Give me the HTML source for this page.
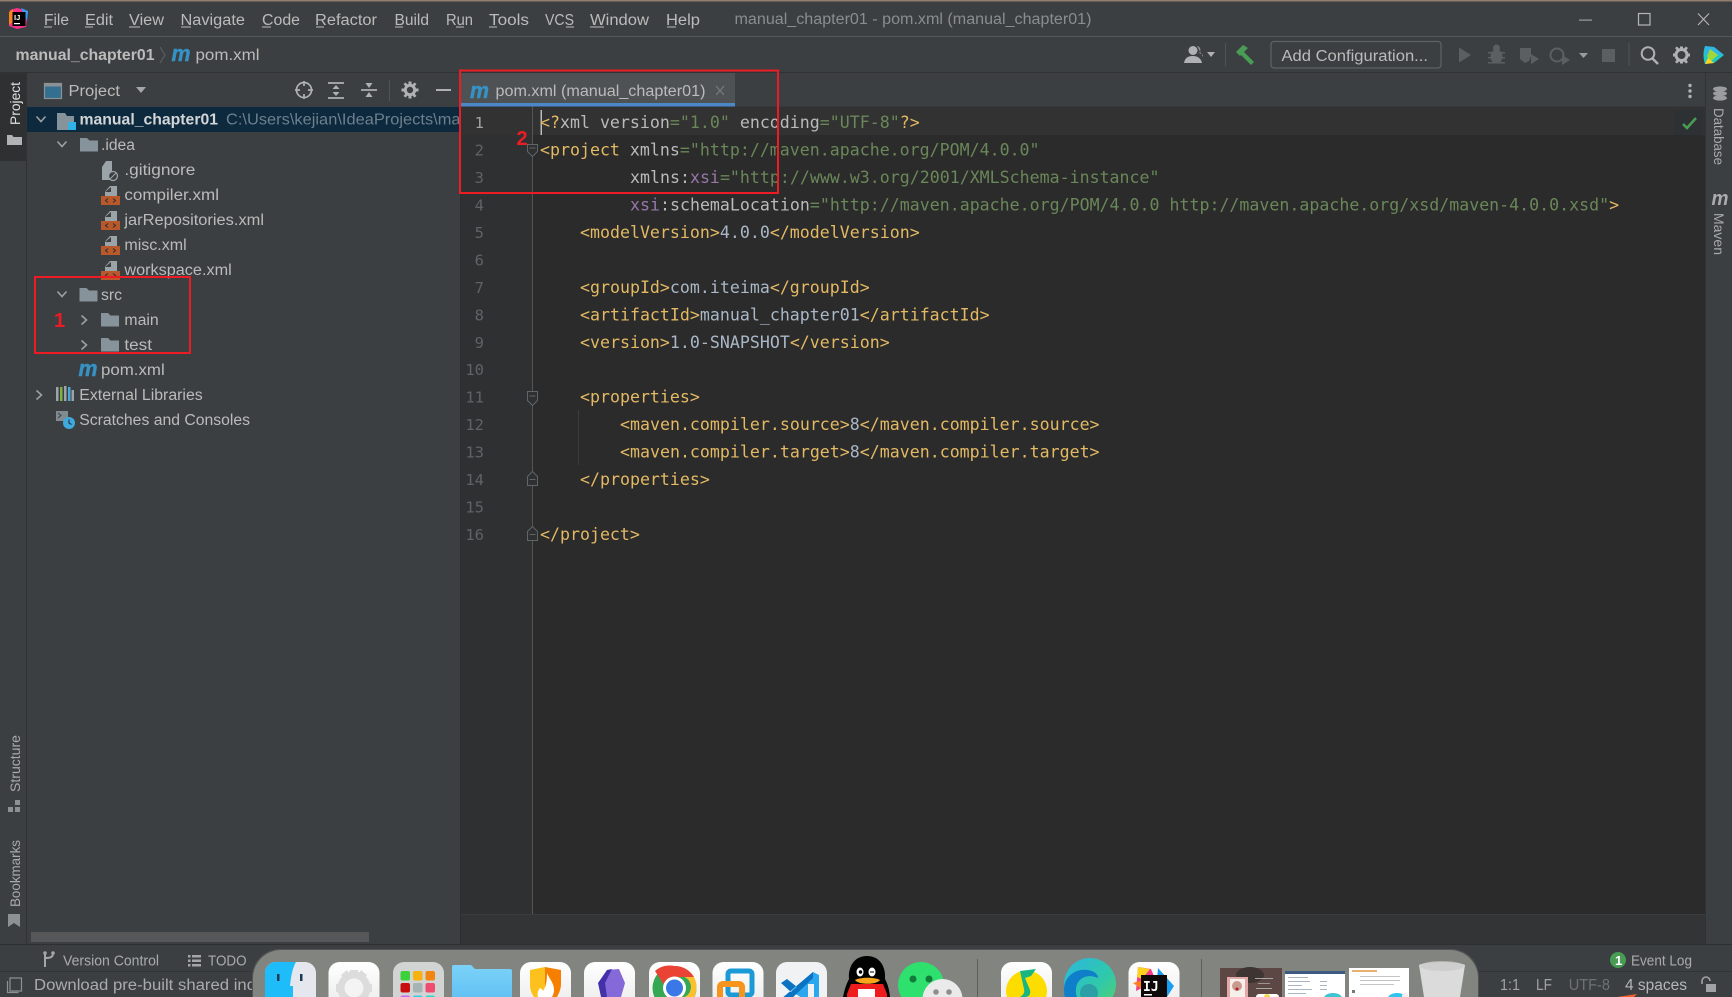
<!DOCTYPE html>
<html><head><meta charset="utf-8"><title>manual_chapter01 - pom.xml</title>
<style>
html,body{margin:0;padding:0;background:#3c3f41;width:1732px;height:997px;overflow:hidden}
svg{display:block;position:absolute;left:0;top:0}
text{font-family:"Liberation Sans",sans-serif;font-size:15.5px;fill:#bbbbbb;white-space:pre}
.m text,text.m{font-family:"DejaVu Sans Mono","Liberation Mono",monospace;font-size:16.6px;fill:#bababa}
.t{fill:#e3b964}.v{fill:#6a8759}.n{fill:#9876aa}.x{fill:#a9b7c6}.a{fill:#bababa}
.ln{font-family:"DejaVu Sans Mono","Liberation Mono",monospace;font-size:15.5px;fill:#606366;text-anchor:end}
.mi{font-weight:bold;font-style:italic;fill:#3592c4;font-size:22px;stroke:#3592c4;stroke-width:.5px}
</style></head><body>
<svg width="1732" height="997" viewBox="0 0 1732 997" xmlns="http://www.w3.org/2000/svg">
<defs>
<path id="folder" d="M0 0h7l2.5 2.5H18V13.5H0z" fill="#87939a"/>
<g id="xmlf"><path d="M4 10V5.500L9 0h7v10z" fill="#9ba4a9"/><path d="M4 6h6V1z" fill="#3c3f41"/><rect x="0" y="10" width="19" height="9" fill="#b9592b"/><path d="M7 12.500l-2.500 2 2.500 2M12 12.500l2.500 2-2.500 2" stroke="#33302e" stroke-width="1.100" fill="none"/></g>
<path id="down" d="M-4.500-2.500L0 2.500l4.500-5" stroke="#9da0a2" stroke-width="1.600" fill="none"/>
<path id="right" d="M-2.500-4.500L2.500 0l-5 4.500" stroke="#9da0a2" stroke-width="1.600" fill="none"/>
<clipPath id="dockc"><path d="M253 997V978a28 28 0 0 1 28-28H1450a28 28 0 0 1 28 28V997z"/></clipPath>
<linearGradient id="edge" x1="0" y1="0" x2="1" y2="1"><stop offset="0" stop-color="#2cb7e0"/><stop offset=".6" stop-color="#30c9a8"/><stop offset="1" stop-color="#5bd168"/></linearGradient>
<linearGradient id="fold" x1="0" y1="0" x2="0" y2="1"><stop offset="0" stop-color="#7cd2f8"/><stop offset="1" stop-color="#62c2f4"/></linearGradient>
<linearGradient id="cube" x1="0" y1="0" x2="0" y2="1"><stop offset="0" stop-color="#ffffff"/><stop offset="1" stop-color="#e9e9e9"/></linearGradient>
</defs>

<!-- base -->
<rect width="1732" height="997" fill="#3c3f41"/>
<rect width="1732" height="1.500" fill="#8f7d6d"/>
<rect y="36" width="1732" height="1" fill="#55585a"/>
<rect y="72" width="1732" height="1" fill="#323232"/>

<!-- logo -->
<g>
<path d="M10 10l7-2 11 3-2 16-9 2-8-3z" fill="#f5318a"/>
<path d="M21 8l7 3-1 10z" fill="#2f9df4"/>
<path d="M9 12l4-3 1 12-5 4z" fill="#fc801d"/>
<rect x="12.500" y="12" width="13" height="14" fill="#000"/>
<text x="14" y="20" style="font-size:7.500px;font-weight:bold;fill:#fff">IJ</text>
<rect x="14" y="23" width="6" height="1.200" fill="#fff"/>
</g>

<!-- menu -->
<g>
<text x="44" y="25" textLength="25" lengthAdjust="spacingAndGlyphs">File</text>
<text x="85" y="25" textLength="28" lengthAdjust="spacingAndGlyphs">Edit</text>
<text x="129" y="25" textLength="35" lengthAdjust="spacingAndGlyphs">View</text>
<text x="180.500" y="25" textLength="64.500" lengthAdjust="spacingAndGlyphs">Navigate</text>
<text x="262" y="25" textLength="38" lengthAdjust="spacingAndGlyphs">Code</text>
<text x="315" y="25" textLength="62" lengthAdjust="spacingAndGlyphs">Refactor</text>
<text x="394.500" y="25" textLength="34.500" lengthAdjust="spacingAndGlyphs">Build</text>
<text x="446" y="25" textLength="27" lengthAdjust="spacingAndGlyphs">Run</text>
<text x="489" y="25" textLength="40" lengthAdjust="spacingAndGlyphs">Tools</text>
<text x="545" y="25" textLength="29" lengthAdjust="spacingAndGlyphs">VCS</text>
<text x="590" y="25" textLength="59" lengthAdjust="spacingAndGlyphs">Window</text>
<text x="666" y="25" textLength="34" lengthAdjust="spacingAndGlyphs">Help</text>
<g fill="#bbbbbb">
<rect x="44" y="26.500" width="8" height="1"/><rect x="85" y="26.500" width="8" height="1"/><rect x="129" y="26.500" width="11" height="1"/><rect x="181" y="26.500" width="10" height="1"/><rect x="262" y="26.500" width="9" height="1"/><rect x="316" y="26.500" width="8" height="1"/><rect x="395" y="26.500" width="8" height="1"/><rect x="456" y="26.500" width="8" height="1"/><rect x="489" y="26.500" width="8" height="1"/><rect x="566" y="26.500" width="8" height="1"/><rect x="590" y="26.500" width="14" height="1"/><rect x="667" y="26.500" width="9" height="1"/>
</g>
<text x="734.500" y="24" textLength="357" lengthAdjust="spacingAndGlyphs" style="fill:#8a8d8f">manual_chapter01 - pom.xml (manual_chapter01)</text>
</g>

<!-- window controls -->
<rect x="1579" y="19.500" width="13" height="1.200" fill="#9a9c9e"/>
<rect x="1638.500" y="13.500" width="11.500" height="11.500" fill="none" stroke="#b4b6b8" stroke-width="1.200"/>
<path d="M1698 13.500l11 11.500M1709 13.500l-11 11.500" stroke="#b4b6b8" stroke-width="1.100"/>

<!-- breadcrumb toolbar -->
<text x="15.500" y="60" textLength="139" lengthAdjust="spacingAndGlyphs" style="font-weight:bold;fill:#bbbbbb">manual_chapter01</text>
<path d="M160 47l5 8-5 8" stroke="#5f6264" fill="none"/>
<text class="mi" x="171.500" y="61" textLength="19" lengthAdjust="spacingAndGlyphs">m</text>
<text x="195.500" y="60" textLength="64" lengthAdjust="spacingAndGlyphs">pom.xml</text>

<!-- right toolbar -->
<g fill="#afb1b3">
<circle cx="1193" cy="50.500" r="4.500"/><path d="M1184 63c1-6 5-7 9-7s8 2 9 7z"/><path d="M1197 46a4 4 0 0 1 2 7l4 2v2z" fill="#8f9193"/>
<path d="M1207 52h8l-4 5z"/>
</g>
<rect x="1225" y="43" width="1" height="23" fill="#515456"/>
<path d="M1243 51l11 11-3 3-11-11zM1236 52l7-7 5 3-8 8z" fill="#499c54"/>
<rect x="1271" y="41.500" width="170" height="26.500" rx="3" fill="#3c3f41" stroke="#5e6163" stroke-width="1.300"/>
<text x="1281.500" y="61" textLength="146.500" lengthAdjust="spacingAndGlyphs">Add Configuration...</text>
<g fill="#5c5f61">
<path d="M1459 47.500l12 7.500-12 7.500z"/>
<ellipse cx="1496.500" cy="56.500" rx="6" ry="7"/><circle cx="1496.500" cy="48" r="3.500"/><path d="M1488 52h17v1.500h-17zM1488 57h17v1.500h-17zM1488 62h17v1.500h-17z"/>
<path d="M1520 48h11v8l-2 5-4 2-5-4z"/><path d="M1531 54l8 5-8 5z"/>
<circle cx="1557" cy="55" r="6.500" fill="none" stroke="#5c5f61" stroke-width="2"/><path d="M1562 55l8 5-8 5z"/>
<path d="M1579 53h9l-4.500 5z" fill="#9a9c9e"/>
<rect x="1602" y="49" width="13" height="13"/>
</g>
<rect x="1628.500" y="43" width="1" height="23" fill="#515456"/>
<circle cx="1648" cy="53.500" r="6.300" fill="none" stroke="#afb1b3" stroke-width="2"/><path d="M1652 58l6 6" stroke="#afb1b3" stroke-width="2.400"/>
<g fill="#afb1b3"><circle cx="1681.500" cy="55" r="5.500" fill="none" stroke="#afb1b3" stroke-width="3"/><path d="M1680 46.500h3v3h-3zM1680 60.500h3v3h-3zM1673 53.500h3v3h-3zM1687 53.500h3v3h-3zM1675 48l2-1.500 2 2-2 2zM1688 48l-2-1.500-2 2 2 2zM1675 62l2 1.500 2-2-2-2zM1688 62l-2 1.500-2-2 2-2z"/></g>
<path d="M1705 46l9 1 10 8-10 8-9 1c-2-6-2-12 0-18z" fill="#20c8c0"/><path d="M1705 46l9 1 10 8-19 0z" fill="#35b0f0" opacity=".8"/><path d="M1710 49l8 6-8 7-3-6z" fill="#9fd838"/><path d="M1705 64l9-1-6-5z" fill="#ffd21f"/>

<!-- left stripe -->
<rect x="26" y="73" width="1" height="872" fill="#323232"/>
<rect x="0" y="73" width="26" height="88" fill="#2e3032"/>
<text transform="translate(20,125) rotate(-90)" textLength="43" lengthAdjust="spacingAndGlyphs" style="font-size:14px;fill:#e0e0e0">Project</text>
<path d="M7 135h5l1.500 2h8.500v8H7z" fill="#b0b2b4"/>
<text transform="translate(20,792) rotate(-90)" textLength="57" lengthAdjust="spacingAndGlyphs" style="font-size:14px;fill:#a9abad">Structure</text>
<path d="M15 800h5v5h-5zM8 807h5v5H8zM15 807h5v5h-5z" fill="#8e9193"/>
<text transform="translate(20,907) rotate(-90)" textLength="67" lengthAdjust="spacingAndGlyphs" style="font-size:14px;fill:#a9abad">Bookmarks</text>
<path d="M8 914h12v13l-6-4-6 4z" fill="#8e9193"/>

<!-- project header -->
<rect x="44.500" y="83.500" width="17" height="15" fill="#33708f" stroke="#8b9195" stroke-width="1.200"/>
<rect x="44.500" y="83.500" width="17" height="3" fill="#8b9195"/>
<text x="68.500" y="96" textLength="51.500" lengthAdjust="spacingAndGlyphs">Project</text>
<path d="M136 87h10l-5 6z" fill="#a4a6a8"/>
<g stroke="#afb1b3" fill="none" stroke-width="1.700">
<circle cx="304" cy="90" r="7.500"/><path d="M304 81v5M304 94v5M295 90h5M308 90h5"/>
<path d="M328 83h16M328 98h16" /><path d="M336 85l-3.500 4h7zM336 96l-3.500-4h7z" fill="#afb1b3" stroke="none"/>
<path d="M361 90h16" /><path d="M369 88l-3.500-5h7zM369 92l-3.500 5h7z" fill="#afb1b3" stroke="none"/>
</g>
<rect x="389" y="80" width="1" height="21" fill="#515456"/>
<circle cx="410" cy="90" r="4.700" fill="none" stroke="#afb1b3" stroke-width="3"/>
<path d="M408.500 81.500h3v3h-3zM408.500 95.500h3v3h-3zM401.500 88.500h3v3h-3zM415.500 88.500h3v3h-3zM403.500 84l2-1.500 2 2-2 2zM416.500 84l-2-1.500-2 2 2 2zM403.500 96l2 1.500 2-2-2-2zM416.500 96l-2 1.500-2-2 2-2z" fill="#afb1b3"/>
<rect x="436" y="89" width="15" height="2" fill="#afb1b3"/>

<!-- tree -->
<rect x="27" y="107" width="433" height="25" fill="#0d293e"/>
<use href="#down" x="41" y="119"/>
<path d="M57 113h8l2 3h7v14H57z" fill="#87939a"/><rect x="68" y="122" width="8" height="8" fill="#33b0e6"/>
<text x="79.500" y="124.500" textLength="138.500" lengthAdjust="spacingAndGlyphs" style="font-weight:bold;fill:#d3d5d7">manual_chapter01</text>
<svg x="0" y="0" width="460" height="997"><text x="226" y="124.500" textLength="240" lengthAdjust="spacingAndGlyphs" style="fill:#6e7f8d">C:\Users\kejian\IdeaProjects\mar</text></svg>

<use href="#down" x="62" y="144"/>
<use href="#folder" x="80" y="138"/>
<text x="101" y="150" textLength="34" lengthAdjust="spacingAndGlyphs">.idea</text>

<path d="M106 161h6v19h-10v-13z" fill="#9ba4a9"/><circle cx="113" cy="176" r="4.500" fill="#3c3f41" stroke="#9ba4a9" stroke-width="1.300"/><path d="M110 179l6-6" stroke="#9ba4a9"/>
<text x="124.400" y="175" textLength="71" lengthAdjust="spacingAndGlyphs">.gitignore</text>
<use href="#xmlf" x="101" y="186"/>
<text x="124.400" y="200" textLength="94.600" lengthAdjust="spacingAndGlyphs">compiler.xml</text>
<use href="#xmlf" x="101" y="211"/>
<text x="124.400" y="225" textLength="139.600" lengthAdjust="spacingAndGlyphs">jarRepositories.xml</text>
<use href="#xmlf" x="101" y="236"/>
<text x="124.400" y="250" textLength="62.300" lengthAdjust="spacingAndGlyphs">misc.xml</text>
<use href="#xmlf" x="101" y="261"/>
<text x="124.400" y="275" textLength="107.300" lengthAdjust="spacingAndGlyphs">workspace.xml</text>

<use href="#down" x="62" y="294"/>
<use href="#folder" x="79.500" y="288"/>
<text x="101" y="300" textLength="21" lengthAdjust="spacingAndGlyphs">src</text>
<use href="#right" x="84" y="320"/>
<use href="#folder" x="101" y="313"/>
<text x="124.400" y="325" textLength="34.300" lengthAdjust="spacingAndGlyphs">main</text>
<use href="#right" x="84" y="345"/>
<use href="#folder" x="101" y="338"/>
<text x="124.400" y="350" textLength="27.600" lengthAdjust="spacingAndGlyphs">test</text>
<text class="mi" x="78.500" y="376" textLength="19" lengthAdjust="spacingAndGlyphs">m</text>
<text x="101" y="375" textLength="63.700" lengthAdjust="spacingAndGlyphs">pom.xml</text>
<use href="#right" x="39" y="395"/>
<path d="M56 387h2.500v14H56z" fill="#9ba4a9"/><path d="M60 387h2.500v14H60z" fill="#7cb342"/><path d="M64 386h2.500v15H64z" fill="#9ba4a9"/><path d="M68 387h2.500v14H68z" fill="#4aa8d8"/><path d="M71.500 390H74v11h-2.500z" fill="#9ba4a9"/>
<text x="79.300" y="400" textLength="123.400" lengthAdjust="spacingAndGlyphs">External Libraries</text>
<rect x="56" y="411" width="12" height="10" fill="#7f8b91"/><path d="M58 413l3 2.500-3 2.500" stroke="#3c3f41" fill="none"/>
<circle cx="69" cy="423" r="6" fill="#3fa8dc"/><path d="M69 419.500V423l2.500 1.500" stroke="#1d3a4a" fill="none" stroke-width="1.200"/>
<text x="79.300" y="425" textLength="170.700" lengthAdjust="spacingAndGlyphs">Scratches and Consoles</text>

<!-- panel scrollbar + divider -->
<rect x="31" y="932" width="338" height="10" fill="#555759"/>
<rect x="460" y="73" width="1" height="872" fill="#2c2e30"/>

<!-- tabs -->
<rect x="461" y="73" width="1245" height="33.500" fill="#3c3f41"/>
<rect x="461" y="73" width="274" height="30" fill="#4e5254"/>
<rect x="461" y="103" width="274" height="3.500" fill="#4a88c7"/>
<text class="mi" x="470" y="98" textLength="19" lengthAdjust="spacingAndGlyphs">m</text>
<text x="495.500" y="96" textLength="210" lengthAdjust="spacingAndGlyphs">pom.xml (manual_chapter01)</text>
<path d="M716 86l8 9M724 86l-8 9" stroke="#787a7c" stroke-width="1.200"/>
<g fill="#afb1b3"><circle cx="1690" cy="85.500" r="1.700"/><circle cx="1690" cy="91" r="1.700"/><circle cx="1690" cy="96.500" r="1.700"/></g>

<!-- editor -->
<rect x="461" y="106.500" width="1244" height="807.500" fill="#2b2b2b"/>
<rect x="461" y="106.500" width="71" height="807.500" fill="#2e3032"/>
<rect x="461" y="106.500" width="1244" height="28.500" fill="#323232"/>
<rect x="1675" y="110" width="28" height="25" fill="#2e3133"/>
<path d="M1683 124l4 4 9-10" stroke="#499c54" stroke-width="2.600" fill="none"/>
<rect x="532" y="106.500" width="1" height="807.500" fill="#555555"/>
<rect x="461" y="914" width="1244" height="31" fill="#323435"/>
<rect x="461" y="914" width="1244" height="1" fill="#3a3c3e"/>

<!-- line numbers -->
<g>
<text class="ln" x="484" y="128" style="fill:#a4a3a3">1</text>
<text class="ln" x="484" y="155.500">2</text>
<text class="ln" x="484" y="183">3</text>
<text class="ln" x="484" y="210.400">4</text>
<text class="ln" x="484" y="237.900">5</text>
<text class="ln" x="484" y="265.400">6</text>
<text class="ln" x="484" y="292.800">7</text>
<text class="ln" x="484" y="320.300">8</text>
<text class="ln" x="484" y="347.800">9</text>
<text class="ln" x="484" y="375.200">10</text>
<text class="ln" x="484" y="402.700">11</text>
<text class="ln" x="484" y="430.200">12</text>
<text class="ln" x="484" y="457.600">13</text>
<text class="ln" x="484" y="485.100">14</text>
<text class="ln" x="484" y="512.600">15</text>
<text class="ln" x="484" y="540">16</text>
</g>

<!-- fold markers -->
<g fill="#2e3032" stroke="#626567">
<path d="M527.500 144.500h10v7l-5 5-5-5z"/><path d="M527.500 391.500h10v9l-5 5-5-5z"/>
<path d="M527.500 485.500h10v-9l-5-5-5 5z"/><path d="M527.500 540.500h10v-9l-5-5-5 5z"/>
<path d="M529.500 148h6M529.500 396h6M529.500 479.500h6M529.500 534.500h6" fill="none"/>
</g>

<!-- code -->
<rect x="540.500" y="110" width="1.500" height="25" fill="#bbbbbb"/>
<g class="m">
<text x="540" y="128"><tspan class="t">&lt;?</tspan><tspan class="a">xml version</tspan><tspan class="v">="1.0"</tspan><tspan class="a"> encoding</tspan><tspan class="v">="UTF-8"</tspan><tspan class="t">?&gt;</tspan></text>
<text x="540" y="155.500"><tspan class="t">&lt;project</tspan><tspan class="a"> xmlns</tspan><tspan class="v">="http://maven.apache.org/POM/4.0.0"</tspan></text>
<text x="630" y="183"><tspan class="a">xmlns:</tspan><tspan class="n">xsi</tspan><tspan class="v">="http://www.w3.org/2001/XMLSchema-instance"</tspan></text>
<text x="630" y="210.400"><tspan class="n">xsi</tspan><tspan class="a">:schemaLocation</tspan><tspan class="v">="http://maven.apache.org/POM/4.0.0 http://maven.apache.org/xsd/maven-4.0.0.xsd"</tspan><tspan class="t">&gt;</tspan></text>
<text x="580" y="237.900"><tspan class="t">&lt;modelVersion&gt;</tspan><tspan class="x">4.0.0</tspan><tspan class="t">&lt;/modelVersion&gt;</tspan></text>
<text x="580" y="292.800"><tspan class="t">&lt;groupId&gt;</tspan><tspan class="x">com.iteima</tspan><tspan class="t">&lt;/groupId&gt;</tspan></text>
<text x="580" y="320.300"><tspan class="t">&lt;artifactId&gt;</tspan><tspan class="x">manual_chapter01</tspan><tspan class="t">&lt;/artifactId&gt;</tspan></text>
<text x="580" y="347.800"><tspan class="t">&lt;version&gt;</tspan><tspan class="x">1.0-SNAPSHOT</tspan><tspan class="t">&lt;/version&gt;</tspan></text>
<text x="580" y="402.700"><tspan class="t">&lt;properties&gt;</tspan></text>
<text x="620" y="430.200"><tspan class="t">&lt;maven.compiler.source&gt;</tspan><tspan class="x">8</tspan><tspan class="t">&lt;/maven.compiler.source&gt;</tspan></text>
<text x="620" y="457.600"><tspan class="t">&lt;maven.compiler.target&gt;</tspan><tspan class="x">8</tspan><tspan class="t">&lt;/maven.compiler.target&gt;</tspan></text>
<text x="580" y="485.100"><tspan class="t">&lt;/properties&gt;</tspan></text>
<text x="540" y="540"><tspan class="t">&lt;/project&gt;</tspan></text>
</g>
<rect x="578" y="410" width="1" height="55" fill="#3a3c3d"/>

<!-- right stripe -->
<rect x="1705" y="73" width="1" height="872" fill="#323232"/>
<g fill="#9a9c9e"><ellipse cx="1720" cy="89" rx="7" ry="2.600"/><ellipse cx="1720" cy="93.500" rx="7" ry="2.600"/><ellipse cx="1720" cy="98" rx="7" ry="2.600"/></g>
<text transform="translate(1714,108) rotate(90)" textLength="57" lengthAdjust="spacingAndGlyphs" style="font-size:14px;fill:#a9abad">Database</text>
<text x="1711.500" y="205" textLength="17" lengthAdjust="spacingAndGlyphs" style="font-weight:bold;font-style:italic;fill:#a9abad;font-size:20px">m</text>
<text transform="translate(1714,213) rotate(90)" textLength="42" lengthAdjust="spacingAndGlyphs" style="font-size:14px;fill:#a9abad">Maven</text>

<!-- bottom bars -->
<rect y="945" width="1732" height="52" fill="#3c3f41"/>
<rect y="944" width="1732" height="1" fill="#2d2f31"/>
<rect y="971" width="1732" height="1" fill="#323436"/>
<path d="M45 954v13M45 958c6 0 8-1 8-5" stroke="#a4a6a8" stroke-width="2" fill="none"/><circle cx="45" cy="953" r="1.800" fill="#a4a6a8"/><circle cx="53" cy="953" r="1.800" fill="#a4a6a8"/>
<text x="63" y="965.500" textLength="96" lengthAdjust="spacingAndGlyphs" style="font-size:14.500px;fill:#a9abad">Version Control</text>
<path d="M188 955h2.500v2.500H188zM192 955h9v2.500h-9zM188 959.500h2.500v2.500H188zM192 959.500h9v2.500h-9zM188 964h2.500v2.500H188zM192 964h9v2.500h-9z" fill="#a4a6a8"/>
<text x="208" y="965.500" textLength="38.500" lengthAdjust="spacingAndGlyphs" style="font-size:14.500px;fill:#a9abad">TODO</text>
<rect x="10" y="978" width="11.500" height="13" fill="none" stroke="#8e9193" stroke-width="1.200"/>
<path d="M7.500 981v11.500h11" fill="none" stroke="#8e9193" stroke-width="1.200"/>
<text x="34" y="990" textLength="222" lengthAdjust="spacingAndGlyphs" style="fill:#a9abad">Download pre-built shared ind</text>

<circle cx="1618" cy="960" r="8" fill="#499c54"/><text x="1615" y="965" style="font-size:13px;font-weight:bold;fill:#fff">1</text>
<text x="1631" y="965.500" textLength="61" lengthAdjust="spacingAndGlyphs" style="font-size:14.500px;fill:#a9abad">Event Log</text>
<text x="1500" y="990" textLength="20" lengthAdjust="spacingAndGlyphs" style="fill:#a0a2a4">1:1</text>
<text x="1536" y="990" textLength="16" lengthAdjust="spacingAndGlyphs" style="fill:#a0a2a4">LF</text>
<text x="1568.700" y="990" textLength="41.300" lengthAdjust="spacingAndGlyphs" style="fill:#6f7274">UTF-8</text>
<text x="1625" y="990" textLength="62" lengthAdjust="spacingAndGlyphs" style="fill:#b4b6b8">4 spaces</text>
<rect x="1706" y="984" width="10" height="8" fill="#a0a2a4"/><path d="M1702 984v-3a4 4 0 0 1 8 0" fill="none" stroke="#a0a2a4" stroke-width="1.600"/>
<path d="M1617 997l20-3-3 3z" fill="#f0622a"/>

<!-- red annotations -->
<rect x="35" y="277" width="155" height="76" fill="none" stroke="#ed1c24" stroke-width="2"/>
<text x="54" y="327" style="font-size:20px;font-weight:bold;fill:#ed1c24">1</text>
<rect x="460" y="70.500" width="318" height="122.500" fill="none" stroke="#ed1c24" stroke-width="2"/>
<text x="516.500" y="145" style="font-size:20px;font-weight:bold;fill:#ed1c24">2</text>

<!-- dock -->
<path d="M252 997V977a28 28 0 0 1 28-28H1451a28 28 0 0 1 28 28V997z" fill="#505452"/>
<g clip-path="url(#dockc)">
<rect x="253" y="950" width="1225" height="47" fill="#82857f"/>
<!-- finder -->
<rect x="265" y="962" width="51" height="51" rx="11" fill="#e4e8ee"/>
<path d="M276 962h20c-3 5-5 13-6 24h3v11H265v-24a11 11 0 0 1 11-11z" fill="#1ebcf8"/>
<rect x="277" y="974" width="2.500" height="7" fill="#1d3b55"/><rect x="300" y="974" width="2.500" height="7" fill="#1d3b55"/>
<!-- settings -->
<rect x="328.500" y="962" width="51" height="51" rx="11" fill="url(#cube)"/>
<circle cx="354" cy="988" r="13" fill="none" stroke="#dcdcdc" stroke-width="7"/>
<circle cx="354" cy="988" r="9" fill="#f4f4f4"/>
<path d="M350 970h8l1 7h-10zM336 984v8l7 1v-10zM372 984v8l-7 1v-10zM341 975l6-5 4 7-5 4zM367 975l-6-5-4 7 5 4z" fill="#dcdcdc"/>
<!-- launchpad -->
<rect x="393" y="962" width="51" height="51" rx="11" fill="#d2d4d3"/>
<g>
<rect x="400.500" y="971" width="9.500" height="9.500" rx="2" fill="#3bd13b"/><rect x="413" y="971" width="9.500" height="9.500" rx="2" fill="#f8b20f"/><rect x="425.500" y="971" width="9.500" height="9.500" rx="2" fill="#f0860f"/>
<rect x="400.500" y="983" width="9.500" height="9.500" rx="2" fill="#c80f0f"/><rect x="413" y="983" width="9.500" height="9.500" rx="2" fill="#a6b3b3"/><rect x="425.500" y="983" width="9.500" height="9.500" rx="2" fill="#f04c70"/>
<rect x="400.500" y="995.500" width="9.500" height="9.500" rx="2" fill="#c868f0"/><rect x="413" y="995.500" width="9.500" height="9.500" rx="2" fill="#30d0e8"/><rect x="425.500" y="995.500" width="9.500" height="9.500" rx="2" fill="#30d8c8"/>
</g>
<!-- folder -->
<path d="M452 967a2 2 0 0 1 2-2h17l4 4h35a2 2 0 0 1 2 2v26h-60z" fill="url(#fold)"/>
<!-- fire -->
<rect x="520" y="962" width="51" height="51" rx="11" fill="url(#cube)"/>
<path d="M530 970l15-3v30h-11c-3-4-4-8-4-13z" fill="#fdc11d"/><path d="M545 967l16 3v14c0 5-2 9-4 13h-12z" fill="#f77f00"/>
<path d="M547 973c3 7 7 10 7 17 0 3-1 5-2 7h-14c-1-3 0-7 2-9 2 1 3 2 3 3 3-4 4-10 4-18z" fill="#fff"/>
<!-- obsidian -->
<rect x="584" y="962" width="51" height="51" rx="11" fill="url(#cube)"/>
<path d="M607 970l12-1 6 14-4 14h-17l-4-14 6-8z" fill="#8569d8"/><path d="M612 969l-5 1-9 13 3 14h6l-2-14z" fill="#4430a8"/>
<!-- chrome -->
<rect x="649" y="962" width="51" height="51" rx="11" fill="url(#cube)"/>
<circle cx="674.500" cy="988" r="22" fill="#34a853"/>
<path d="M674.500 966a22 22 0 0 1 19.500 11h-20a11 11 0 0 0-10 8l-9-14a22 22 0 0 1 19.500-5z" fill="#ea4335"/>
<path d="M694 977a22 22 0 0 1 2.500 11c0 3-1 6-2 9h-10a11 11 0 0 0 0-20z" fill="#fbc02d"/>
<circle cx="674.500" cy="988" r="11.500" fill="#fff"/><circle cx="674.500" cy="988" r="8.500" fill="#3b78e7"/>
<!-- vmware -->
<rect x="712.500" y="962" width="51" height="51" rx="11" fill="url(#cube)"/>
<rect x="728" y="971" width="24" height="24" rx="3" fill="none" stroke="#1b9ad6" stroke-width="5"/>
<rect x="720" y="984" width="22" height="22" rx="3" fill="none" stroke="#f7941d" stroke-width="6"/>
<!-- vscode -->
<rect x="776" y="962" width="51" height="51" rx="11" fill="#f1f2f3"/>
<path d="M813 972l-22 19 22 14 6-3v-27z" fill="#2ba6ef"/>
<path d="M781 983l6-4 10 8-6 5zM781 999l6 4 26-25v-6z" fill="#0b73c2"/>
<rect x="808" y="984" width="6" height="13" fill="#f1f2f3"/>
<!-- qq -->
<path d="M843 997c2-10 4-14 6-18-1-12 5-23 18-23s19 11 18 23c2 4 4 8 5 18z" fill="#020202"/>
<path d="M847 994c6-3 35-3 40 0v3h-40z" fill="#ee1c1c"/><path d="M851 984h32l4 10h-40z" fill="#ee1c1c"/>
<rect x="858" y="989" width="17" height="8" fill="#fff"/>
<path d="M855 980c5-3 20-3 25 0-3 5-22 5-25 0z" fill="#f8a51c"/>
<ellipse cx="860" cy="972" rx="3.500" ry="4.500" fill="#fff"/><ellipse cx="872" cy="972" rx="3.500" ry="4.500" fill="#fff"/><circle cx="860.500" cy="972" r="1.700" fill="#000"/><path d="M870 972h4" stroke="#000"/>
<!-- wechat -->
<circle cx="921" cy="985" r="23" fill="#2ee06e"/>
<circle cx="913" cy="979" r="3.500" fill="#127a3b"/><circle cx="929" cy="979" r="3.500" fill="#127a3b"/>
<circle cx="942.500" cy="999" r="20" fill="#eaeaea"/>
<circle cx="936" cy="992" r="2.800" fill="#8e8e8e"/><circle cx="949" cy="992" r="2.800" fill="#8e8e8e"/>
<!-- dividers -->
<rect x="977" y="959" width="1" height="40" fill="#5c5f5c"/>
<rect x="1201" y="959" width="1" height="40" fill="#5c5f5c"/>
<!-- qq music -->
<rect x="1001" y="962" width="51" height="51" rx="11" fill="url(#cube)"/>
<circle cx="1026.500" cy="991" r="20.500" fill="#fddd00"/>
<path d="M1020 971l16-2-5 7-6 2 5 12c1 4-1 7-5 7h-5c3-2 5-4 4-8z" fill="#17b683"/>
<!-- edge -->
<circle cx="1090" cy="984" r="26" fill="url(#edge)"/>
<path d="M1064 990c0-14 12-22 24-20 6 1 10 4 10 8-8-4-20-2-22 10-1 8 2 12 6 14h-16c-1-4-2-8-2-12z" fill="#0f7fc9"/>
<circle cx="1089" cy="993" r="9" fill="#2b9fa6"/>
<!-- ij -->
<rect x="1128.500" y="962" width="51" height="51" rx="11" fill="url(#cube)"/>
<path d="M1138 967l13 2 5 12-20 10z" fill="#f53d89"/><path d="M1138 967l12 2-8 10-5-2z" fill="#fcd21f"/><path d="M1158 968l16 18-9 14-8-20z" fill="#1a9cf0"/><path d="M1133 983l10-3v10z" fill="#fc801d"/>
<rect x="1141" y="975" width="26" height="26" fill="#0e0a0a"/>
<text x="1143" y="991" style="font-size:13px;font-weight:bold;fill:#fff;font-family:'DejaVu Sans Mono',monospace">IJ</text>
<rect x="1144" y="994" width="8" height="1.500" fill="#fff"/>
<!-- thumbs -->
<rect x="1220" y="968" width="62" height="29" fill="#5d4745"/>
<ellipse cx="1250" cy="975" rx="14" ry="8" fill="#3e3432"/>
<rect x="1227" y="977" width="21" height="20" fill="#e3a8a8"/><rect x="1230" y="979" width="15" height="18" fill="#f6f0ea"/><circle cx="1237" cy="986" r="5" fill="#c99a8e"/><circle cx="1237" cy="989" r="1.500" fill="#b01e2e"/>
<rect x="1255" y="978" width="18" height="1" fill="#a8a4a0"/><rect x="1258" y="983" width="12" height="1" fill="#9a9590"/><rect x="1256" y="988" width="16" height="1" fill="#a8a4a0"/>
<rect x="1256" y="994" width="23" height="6" rx="3" fill="#fff"/><circle cx="1267" cy="997" r="3" fill="#f2d64b"/>
<rect x="1285" y="971" width="60" height="26" fill="#ffffff"/><rect x="1285" y="971" width="60" height="3" fill="#3d5a80"/>
<g fill="#a9b4c2"><rect x="1288" y="977" width="20" height="1"/><rect x="1288" y="981" width="22" height="1"/><rect x="1288" y="985" width="14" height="1"/><rect x="1288" y="989" width="24" height="1"/><rect x="1288" y="993" width="18" height="1"/><rect x="1320" y="981" width="7" height="1"/><rect x="1320" y="985" width="7" height="1"/><rect x="1320" y="989" width="7" height="1"/></g>
<ellipse cx="1333" cy="998" rx="9" ry="5" fill="#3ec5cf"/>
<rect x="1349" y="968" width="60" height="29" fill="#ffffff"/><g fill="#c4c4c4"><rect x="1352" y="970" width="25" height="2" fill="#e8b070"/><rect x="1360" y="976" width="40" height="1"/><rect x="1360" y="980" width="40" height="1"/><rect x="1360" y="984" width="34" height="1"/><rect x="1352" y="990" width="3" height="3" fill="#777"/></g>
<ellipse cx="1397" cy="998" rx="9" ry="5" fill="#2fc3ee"/><ellipse cx="1405" cy="996" rx="3" ry="3" fill="#eee"/>
<!-- trash -->
<path d="M1419 965c8-4 38-4 46 0l-5 32h-36z" fill="#dadbda"/>
<ellipse cx="1442" cy="966" rx="22" ry="5" fill="#c8c9c8" opacity=".7"/>
</g>
</svg>
</body></html>
